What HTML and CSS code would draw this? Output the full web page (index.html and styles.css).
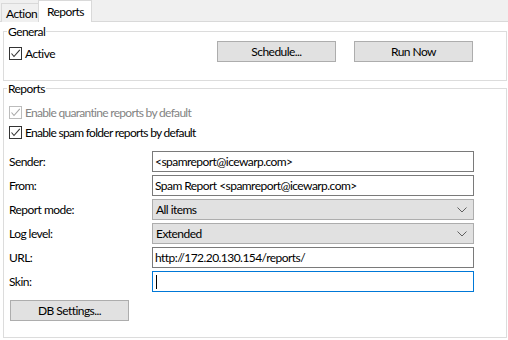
FILE: index.html
```html
<!DOCTYPE html>
<html>
<head>
<meta charset="utf-8">
<link rel="stylesheet" href="styles.css">
</head>
<body>
<div class="window">
  <div class="tabstrip">
    <div class="tab">Action</div>
    <div class="tab active">Reports</div>
  </div>
  <div class="page">
    <fieldset class="group general">
      <legend>General</legend>
      <div class="general-row">
        <label class="check">
          <span class="box"><svg width="11" height="11" viewBox="0 0 11 11"><path d="M1.5 5.5 L4 8.5 L9.8 1.8" fill="none" stroke="#333" stroke-width="1.1"/></svg></span>
          <span>Active</span>
        </label>
        <button class="btn schedule">Schedule...</button>
        <button class="btn runnow">Run Now</button>
      </div>
    </fieldset>
    <fieldset class="group reports">
      <legend>Reports</legend>
      <label class="check row disabled">
        <span class="box"><svg width="11" height="11" viewBox="0 0 11 11"><path d="M1.5 5.5 L4 8.5 L9.8 1.8" fill="none" stroke="#a8a8a8" stroke-width="1.1"/></svg></span>
        <span>Enable quarantine reports by default</span>
      </label>
      <label class="check row">
        <span class="box"><svg width="11" height="11" viewBox="0 0 11 11"><path d="M1.5 5.5 L4 8.5 L9.8 1.8" fill="none" stroke="#333" stroke-width="1.1"/></svg></span>
        <span>Enable spam folder reports by default</span>
      </label>
      <div class="form">
        <span class="lbl">Sender:</span>
        <div class="input">&lt;spamreport@icewarp.com&gt;</div>
        <span class="lbl">From:</span>
        <div class="input">Spam Report &lt;spamreport@icewarp.com&gt;</div>
        <span class="lbl">Report mode:</span>
        <div class="select"><span>All items</span><svg width="10" height="6" viewBox="0 0 10 6"><path d="M0.5 0.5 L5 5 L9.5 0.5" fill="none" stroke="#606060" stroke-width="1"/></svg></div>
        <span class="lbl">Log level:</span>
        <div class="select"><span>Extended</span><svg width="10" height="6" viewBox="0 0 10 6"><path d="M0.5 0.5 L5 5 L9.5 0.5" fill="none" stroke="#606060" stroke-width="1"/></svg></div>
        <span class="lbl">URL:</span>
        <div class="input">http://172.20.130.154/reports/</div>
        <span class="lbl">Skin:</span>
        <div class="input focus"><span class="caret"></span></div>
      </div>
      <button class="btn db">DB Settings...</button>
    </fieldset>
  </div>
</div>
</body>
</html>
```

FILE: styles.css
```css
* { box-sizing: border-box; }
html, body { margin: 0; padding: 0; background: #ffffff; }
body {
  font-family: Lato, "Noto Sans", sans-serif;
  font-size: 12px;
  line-height: 15px;
  letter-spacing: -0.55px;
  color: #000;
  width: 508px;
  height: 340px;
  overflow: hidden;
}
.window { width: 508px; height: 340px; background: #fff; }
.tabstrip {
  height: 22px;
  background: #f0f0f0;
  border-bottom: 1px solid #d9d9d9;
  display: flex;
  align-items: flex-end;
}
.tab {
  height: 19px;
  margin-bottom: -1px;
  border: 1px solid #d9d9d9;
  border-bottom: none;
  background: #f0f0f0;
  padding: 2px 0 0 4px;
  white-space: nowrap;
}
.tab:first-child { margin-left: 1px; width: 37px; border-right: none; }
.tab.active {
  height: 22px;
  width: 54px;
  background: #fff;
  padding: 3px 0 0 8px;
  position: relative;
}
.page { background: #fff; padding: 0 2px 0 3px; }
.group {
  margin: 0;
  padding: 0 5px;
  border: 1px solid #dcdcdc;
  width: 504px;
  min-width: 0;
}
.group legend {
  padding: 0 1px;
  margin-left: -2px;
  line-height: 15px;
}
.general { height: 57px; margin-top: 2px; padding-top: 2px; }
.general-row { display: flex; align-items: flex-start; }
.general-row .check { margin-top: 5px; width: 208px; }
.btn {
  font: inherit;
  letter-spacing: inherit;
  color: #000;
  background: #e1e1e1;
  border: 1px solid #adadad;
  width: 119px;
  height: 21px;
  padding: 0;
  line-height: 19px;
  text-align: center;
  border-radius: 0;
}
.runnow { margin-left: 18px; }
.reports { height: 257px; padding-top: 7px; }
.check { display: flex; align-items: center; gap: 3px; }
.check.row { height: 19px; }
.check.row + .check.row { margin-top: 1px; }
.check.row span:last-child { letter-spacing: -0.7px; }
.box {
  width: 13px;
  height: 13px;
  border: 1px solid #333;
  background: #fff;
  display: flex;
  align-items: center;
  justify-content: center;
  flex: none;
}
.disabled { color: #838383; }
.disabled .box { border-color: #bcbcbc; }
.form {
  margin-top: 9px;
  display: grid;
  grid-template-columns: 143px 322px;
  grid-auto-rows: 21px;
  row-gap: 3px;
  align-items: center;
}
.lbl { line-height: 21px; }
.input, .select {
  height: 21px;
  border: 1px solid #7a7a7a;
  background: #fff;
  padding: 0 0 0 2px;
  line-height: 19px;
  white-space: nowrap;
  overflow: hidden;
}
.select {
  background: #e1e1e1;
  border-color: #adadad;
  display: flex;
  align-items: center;
  justify-content: space-between;
  padding: 0 6px 0 3px;
}
.input.focus { border-color: #0078d7; display: flex; align-items: center; }
.caret { width: 1px; height: 14px; background: #000; margin-left: 1px; }
.db { margin-top: 8px; margin-left: 1px; display: block; }
```
